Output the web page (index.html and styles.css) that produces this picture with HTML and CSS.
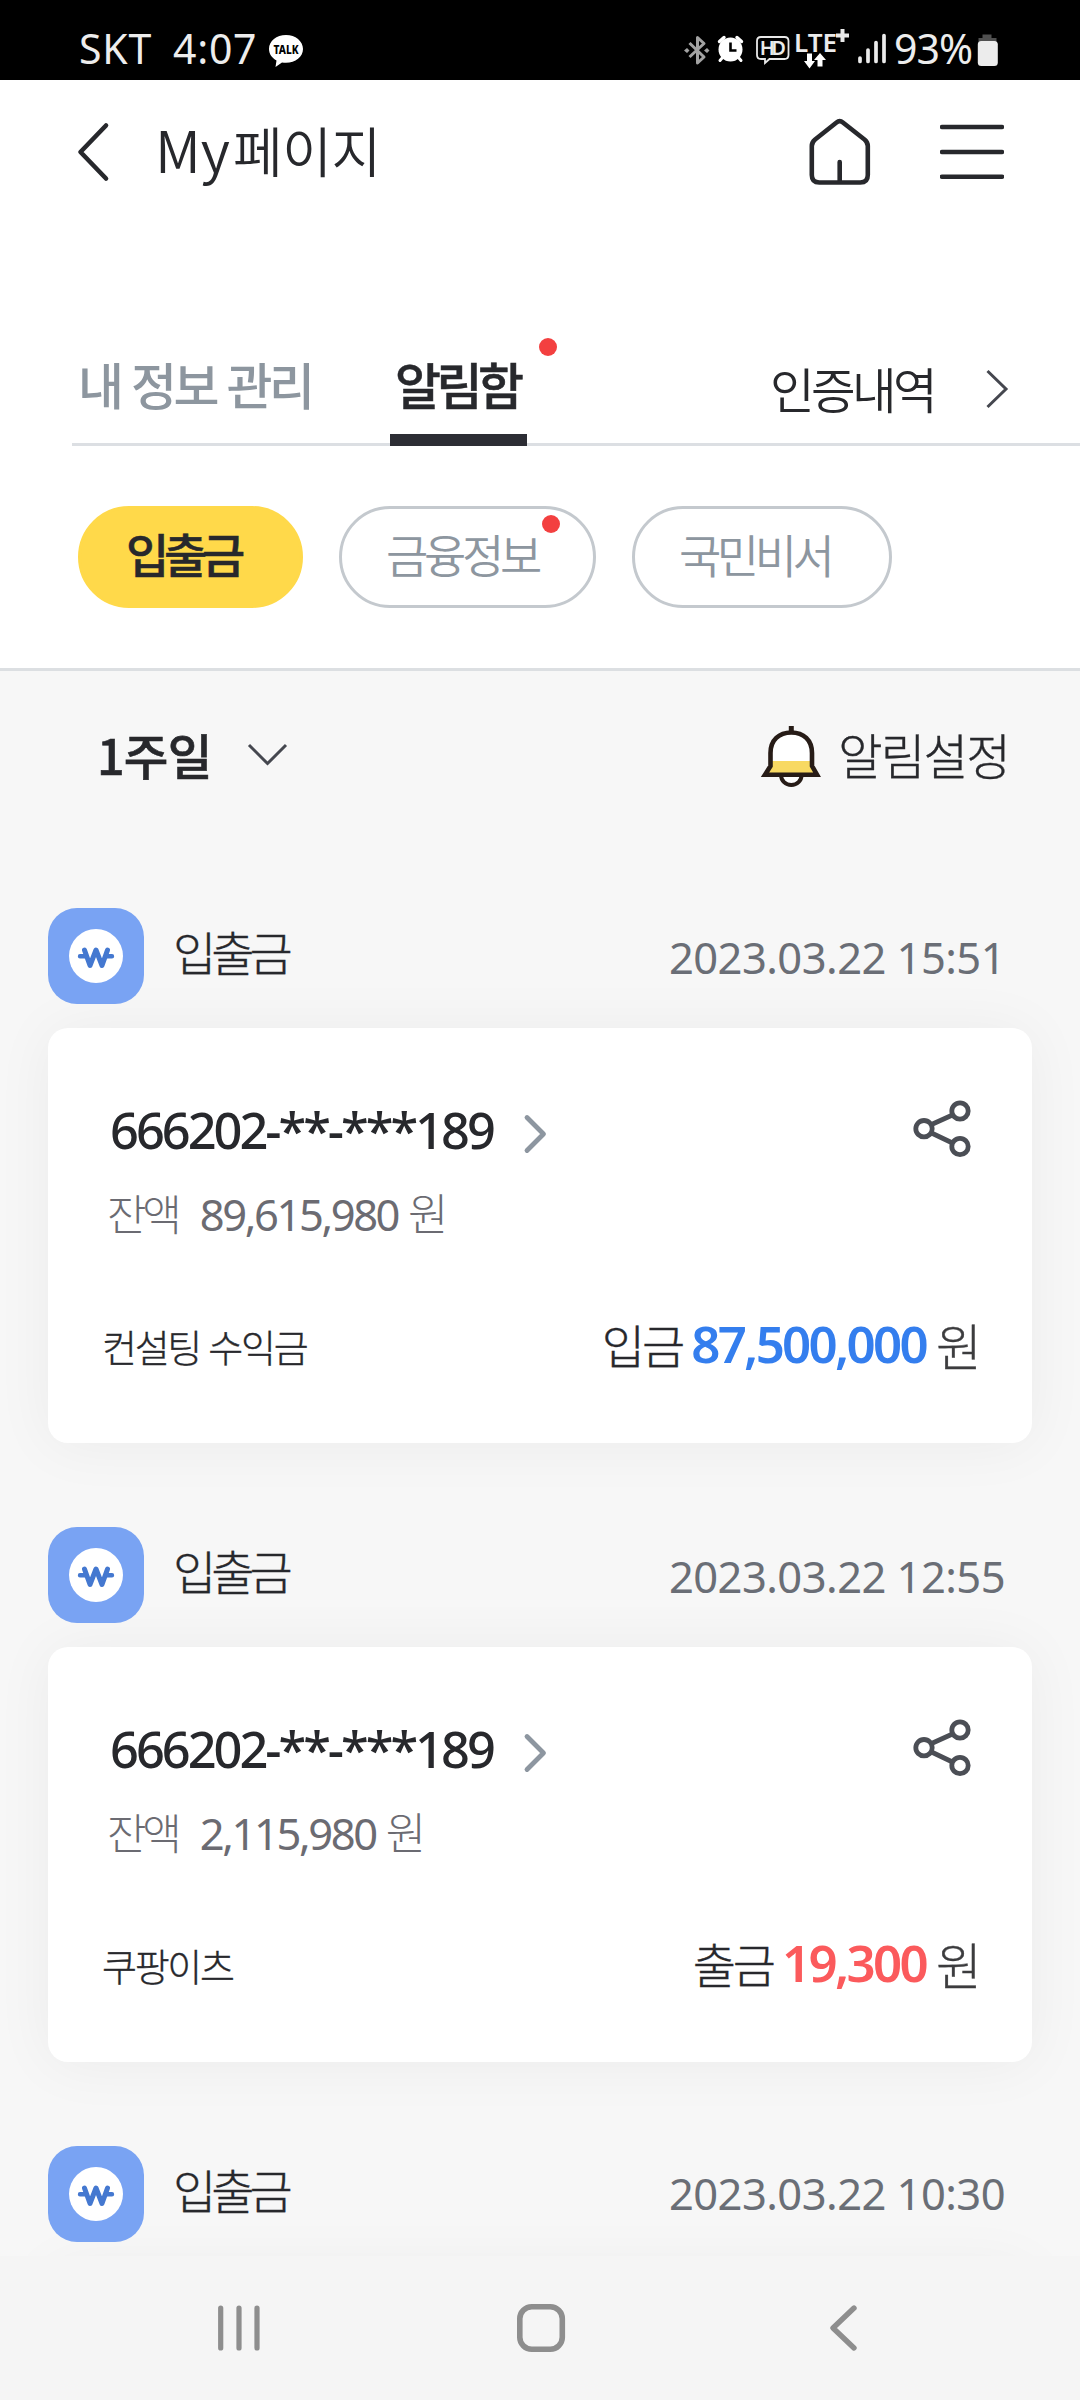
FILE: index.html
```
<!DOCTYPE html>
<html lang="ko">
<head>
<meta charset="utf-8">
<title>My페이지</title>
<link rel="stylesheet" href="styles.css">
</head>
<body>
<svg width="0" height="0" class="defs" aria-hidden="true">
  <symbol id="won" viewBox="0 0 96 96">
    <circle cx="48" cy="48" r="27" fill="#fff"/>
    <path d="M36.500 42.200l5.500 15.300L48 42l6 15.500 5.500-15.300" fill="none" stroke="#4478d0" stroke-width="5" stroke-linecap="round" stroke-linejoin="round"/>
    <path d="M32 48.200h6M58 48.200h6" stroke="#4478d0" stroke-width="4.400" stroke-linecap="round"/>
  </symbol>
  <symbol id="share" viewBox="0 0 60 60">
    <g fill="none" stroke="#4b4e55" stroke-width="4.800">
      <circle cx="12" cy="29.700" r="8.200"/><circle cx="48" cy="12" r="8.200"/><circle cx="48" cy="47.500" r="8.200"/>
      <path d="M19.500 25.500l21-9.500M19.500 34l21 10"/>
    </g>
  </symbol>
  <symbol id="go" viewBox="0 0 26 40">
    <path d="M5 3.500L21.500 20 5 36.500" fill="none" stroke="#8d96a0" stroke-width="4.800" stroke-linecap="round" stroke-linejoin="round"/>
  </symbol>
</svg>

<div class="statusbar">
  <span class="carrier">SKT</span>
  <span class="clock">4:07</span>
  <svg class="talk" width="40" height="80" viewBox="0 0 40 80">
    <path d="M20 35C10.500 35 3 41 3 49c0 5 3 9 7.500 11.500L9.500 67l6.500-4.500c1.300.2 2.600.3 4 .3 9.500 0 17-6 17-13.800S29.500 35 20 35z" fill="#fff"/>
    <text x="20" y="54" text-anchor="middle" textLength="25" lengthAdjust="spacingAndGlyphs" class="talk-text">TALK</text>
  </svg>
  <svg class="indicators" width="212" height="80" viewBox="680 0 212 80">
    <path d="M689.500 43l14.500 14-6.500 6V37.500l6.500 6-14.500 13.500" fill="none" stroke="#a2a2a2" stroke-width="3" stroke-linejoin="round"/>
    <path d="M684 50.500l3-2.500 2.500 2.500-2.500 2.500zM704 50.500l3-2.500 2.500 2.500-2.500 2.500z" fill="#a2a2a2"/>
    <circle cx="730.500" cy="49.500" r="12" fill="#fff"/>
    <path d="M719.500 41.500l4.500-4M741.500 41.500l-4.500-4" stroke="#fff" stroke-width="3.400" stroke-linecap="round"/>
    <path d="M723 57l-3 3.500M738 57l3 3.500" stroke="#fff" stroke-width="3" stroke-linecap="round"/>
    <path d="M730.500 42.500v8h6" fill="none" stroke="#000" stroke-width="2.600"/>
    <path d="M761 37h23.500q4 0 4 4v14q0 4-4 4h-15l-4.500 4v-4h-4q-4 0-4-4V41q0-4 4-4z" fill="none" stroke="#e8e8e8" stroke-width="1.800"/>
    <text x="772.800" y="55" text-anchor="middle" textLength="26" class="hd-text">HD</text>
    <text x="794" y="52" textLength="43" class="lte-text">LTE</text>
    <path d="M842.500 29v13M836 35.500h13" stroke="#ebebeb" stroke-width="4"/>
    <path d="M807 53.500h5V61h3l-5.500 7.500L804 61h3zM817.500 66.500h5V60h3.500l-6-7-6 7h3.500z" fill="#fff"/>
    <path d="M860 58v3.500M868 50v11.500M876 42.500v19M884 35.500v26" stroke="#ebebeb" stroke-width="3.700" stroke-linecap="round"/>
  </svg>
  <span class="battery-level">93%</span>
  <svg width="24" height="80" viewBox="974 0 24 80">
    <path d="M982.500 34.500h9V38h5v6h-18v-6h4z" fill="#505050"/>
    <rect x="977.800" y="41" width="20" height="25" rx="3.500" fill="#ececec"/>
  </svg>
</div>

<header class="header">
  <svg width="34" height="64" viewBox="76 120 34 64"><path d="M106 125.500L80.500 152 106 178.500" fill="none" stroke="#27282c" stroke-width="4.600" stroke-linecap="round" stroke-linejoin="round"/></svg>
  <h1 class="title">My<span class="title-ko">페이지</span></h1>
  <div class="actions">
    <svg width="64" height="68" viewBox="808 118 64 68"><path d="M836.500 122.500q3.200-2.600 6.400 0l21.600 17q3.300 2.800 3.300 6.500v29q0 7.500-7.500 7.500h-41q-7.500 0-7.500-7.500v-29q0-3.700 3.300-6.500zM839.700 182v-20" fill="none" stroke="#27282c" stroke-width="4.600" stroke-linecap="round" stroke-linejoin="round"/></svg>
    <svg width="64" height="60" viewBox="940 122 64 60"><path d="M942 127h60M942 152h60M942 176.700h60" stroke="#27282c" stroke-width="4.600" stroke-linecap="round"/></svg>
  </div>
</header>

<nav class="tabs">
  <span class="tab">내 정보 관리</span>
  <span class="tab tab-active">알림함<i class="dot"></i></span>
  <span class="cert">인증내역
    <svg width="26" height="44" viewBox="984 367 26 44"><path d="M987.500 372l18.500 18-18.500 18" fill="none" stroke="#45474f" stroke-width="3"/></svg>
  </span>
</nav>

<div class="chips">
  <span class="chip chip-active">입출금</span>
  <span class="chip">금융정보<i class="dot"></i></span>
  <span class="chip chip-last">국민비서</span>
</div>

<main class="feed">
  <div class="filter">
    <span class="period">1주일</span>
    <svg width="44" height="26" viewBox="246 742 44 26"><path d="M249 746l18.500 18.500L286 746" fill="none" stroke="#45474f" stroke-width="3"/></svg>
    <span class="settings">
      <svg width="62" height="60" viewBox="0 0 62 60" class="bell">
        <path d="M31.300 2v6" stroke="#271c17" stroke-width="5"/>
        <path d="M21 51a10.300 10 0 0 0 20.600 0" fill="#fff" stroke="#271c17" stroke-width="4"/>
        <path d="M10.500 42V29C10.500 16 19 8.500 31.300 8.500S52 16 52 29v13l5 8.700H5z" fill="#fff"/>
        <path d="M10.500 37H52v5l5 8.700H5l5.500-8.700z" fill="#f8d962"/>
        <path d="M10.500 42V29C10.500 16 19 8.500 31.300 8.500S52 16 52 29v13l5 8.700H5z" fill="none" stroke="#271c17" stroke-width="4.600"/>
      </svg>알림설정</span>
  </div>

  <section class="item">
    <div class="item-head">
      <svg class="item-icon"><use href="#won"/></svg>
      <span class="kind">입출금</span>
      <time class="date">2023.03.22 15:51</time>
    </div>
    <article class="card">
      <div class="account-row">
        <span class="account">666202-**-***189</span>
        <svg class="go"><use href="#go"/></svg>
        <svg class="share"><use href="#share"/></svg>
      </div>
      <div class="balance"><span>잔액</span><span class="balance-num">89,615,980</span><span class="balance-won">원</span></div>
      <div class="detail">
        <span class="memo">컨설팅 수익금</span>
        <span class="amount"><span class="amount-kind">입금</span><b class="num in">87,500,000</b><span class="won">원</span></span>
      </div>
    </article>
  </section>

  <section class="item">
    <div class="item-head">
      <svg class="item-icon"><use href="#won"/></svg>
      <span class="kind">입출금</span>
      <time class="date">2023.03.22 12:55</time>
    </div>
    <article class="card">
      <div class="account-row">
        <span class="account">666202-**-***189</span>
        <svg class="go"><use href="#go"/></svg>
        <svg class="share"><use href="#share"/></svg>
      </div>
      <div class="balance"><span>잔액</span><span class="balance-num">2,115,980</span><span class="balance-won">원</span></div>
      <div class="detail">
        <span class="memo">쿠팡이츠</span>
        <span class="amount"><span class="amount-kind">출금</span><b class="num out">19,300</b><span class="won">원</span></span>
      </div>
    </article>
  </section>

  <section class="item">
    <div class="item-head">
      <svg class="item-icon"><use href="#won"/></svg>
      <span class="kind">입출금</span>
      <time class="date date-last">2023.03.22 10:30</time>
    </div>
    <article class="card"></article>
  </section>
</main>

<footer class="navbar">
  <svg width="50" height="54" viewBox="214 2301 50 54"><path d="M220.700 2308v40M239 2308v40M257 2308v40" stroke="#8e8e8e" stroke-width="5.200" stroke-linecap="round"/></svg>
  <svg width="54" height="54" viewBox="514 2301 54 54"><rect x="519.800" y="2306.700" width="42.500" height="42.500" rx="12" fill="none" stroke="#8e8e8e" stroke-width="5.600"/></svg>
  <svg width="34" height="54" viewBox="827 2301 34 54"><path d="M854 2308l-21 20 21 20" fill="none" stroke="#8e8e8e" stroke-width="5.400" stroke-linecap="round" stroke-linejoin="round"/></svg>
</footer>
</body>
</html>
```
FILE: styles.css
```
* { box-sizing: border-box; }

body {
  margin: 0;
  width: 1080px;
  height: 2400px;
  display: flex;
  flex-direction: column;
  overflow: hidden;
  background: #fff;
  color: #27282c;
  font-family: "Noto Sans CJK KR", "Noto Sans", sans-serif;
  font-weight: 350;
  white-space: nowrap;
}

svg { display: block; flex: none; }
.defs { position: absolute; }

/* Status bar */
.statusbar {
  flex: none;
  height: 80px;
  padding: 0 82px 0 79px;
  display: flex;
  align-items: flex-start;
  background: #000;
  color: #ededed;
  font: 400 41px/64px "Noto Sans", sans-serif;
}
.statusbar span { padding-top: 16px; }
.carrier { letter-spacing: .8px; }
.clock { margin-left: 21px; letter-spacing: .7px; }
.talk { margin-left: 9px; }
.talk-text { font: 800 12.5px "Noto Sans", sans-serif; fill: #000; }
.indicators { margin-left: auto; }
.hd-text { font: 600 20px "Noto Sans", sans-serif; fill: #ebebeb; }
.lte-text { font: 600 26px "Noto Sans", sans-serif; fill: #ebebeb; }
.battery-level { margin: 0 2px; letter-spacing: -1px; }

/* Header */
.header {
  flex: none;
  height: 144px;
  padding: 0 76px;
  display: flex;
  align-items: center;
}
.title {
  margin: 0 0 6px 45px;
  font-size: 57px;
  line-height: 60px;
  font-weight: 350;
  letter-spacing: 0;
}
.title-ko {
  margin-left: 3px;
  font-size: 54px;
  letter-spacing: -.5px;
}
.actions { margin-left: auto; display: flex; align-items: center; gap: 68px; }

/* Tabs */
.tabs {
  flex: none;
  height: 222px;
  margin-left: 72px;
  border-bottom: 3px solid #dcdfe3;
  display: flex;
  align-items: flex-end;
}
.tab {
  position: relative;
  width: 318px;
  margin-bottom: -3px;
  padding: 0 0 21px 6px;
  border-bottom: 12px solid transparent;
  font-size: 50px;
  line-height: 60px;
  font-weight: 500;
  letter-spacing: -3.5px;
  color: #8d969f;
}
.tab-active {
  width: 137px;
  padding-left: 5px;
  border-color: #2c2d34;
  color: #27282c;
  letter-spacing: -4.5px;
  -webkit-text-stroke: .5px #27282c;
}
.dot {
  position: absolute;
  width: 18px;
  height: 18px;
  border-radius: 50%;
  background: #f34040;
}
.tab .dot { left: 149px; top: -15px; }
.cert {
  margin-left: auto;
  padding: 0 70px 25px 0;
  display: flex;
  align-items: center;
  gap: 50px;
  font-size: 48.5px;
  line-height: 60px;
  letter-spacing: -3.6px;
}

/* Chips */
.chips {
  flex: none;
  height: 225px;
  padding: 60px 0 0 78px;
  border-bottom: 3px solid #dcdfe2;
  display: flex;
  gap: 36px;
}
.chip {
  position: relative;
  width: 257px;
  height: 102px;
  padding-left: 44px;
  border: 3px solid #c4c9ce;
  border-radius: 51px;
  font-size: 46px;
  line-height: 88px;
  letter-spacing: -4.3px;
  color: #8d969f;
}
.chip-active {
  width: 225px;
  padding-left: 45px;
  border-color: #ffd94a;
  background: #ffd94a;
  color: #27282c;
  font-size: 47px;
  font-weight: 500;
  letter-spacing: -5.3px;
  -webkit-text-stroke: .5px #27282c;
}
.chip-last { width: 260px; letter-spacing: -4.5px; }
.chip .dot { left: 200px; top: 6px; }

/* Notification feed */
.feed {
  flex: none;
  height: 1585px;
  padding: 53px 48px 0;
  overflow: hidden;
  background: #f7f7f7;
}
.filter {
  height: 60px;
  margin-bottom: 124px;
  padding: 0 23px 0 49px;
  display: flex;
  align-items: center;
  gap: 34px;
  font-size: 48.5px;
  line-height: 60px;
}
.period {
  font-weight: 500;
  letter-spacing: -.8px;
  -webkit-text-stroke: .6px #27282c;
}
.settings {
  margin-left: auto;
  display: flex;
  gap: 16px;
  font-weight: 300;
  letter-spacing: -1.9px;
  -webkit-text-stroke: .35px #27282c;
}
.bell { overflow: visible; }

.item { margin-bottom: 84px; }
.item-head {
  height: 96px;
  margin-bottom: 24px;
  padding-right: 27px;
  display: flex;
  align-items: center;
}
.item-icon {
  width: 96px;
  height: 96px;
  border-radius: 29px;
  background: #79a3f3;
}
.kind {
  margin: 0 0 10px 29px;
  font-size: 47px;
  line-height: 60px;
  font-weight: 300;
  letter-spacing: -5px;
  -webkit-text-stroke: .35px #27282c;
}
.date {
  margin: 2px 0 0 auto;
  font: 400 43.5px/60px "Noto Sans", sans-serif;
  letter-spacing: -.55px;
  color: #6a6e76;
}
.date-last { margin-top: -3px; }

.card {
  height: 415px;
  padding: 71px 60px 0 62px;
  border-radius: 20px;
  background: #fff;
  box-shadow: 0 2px 60px rgba(0, 0, 0, .05);
}
.account-row { height: 60px; display: flex; align-items: center; }
.account {
  margin-top: 2px;
  font: 500 50.5px/60px "Noto Sans", sans-serif;
  letter-spacing: -3px;
}
.go { width: 26px; height: 40px; margin: 10px 0 0 29px; }
.share { width: 60px; height: 60px; margin-left: auto; }

.balance {
  margin: 28px 0 0 -3px;
  display: flex;
  align-items: baseline;
  font-size: 43px;
  line-height: 50px;
  font-weight: 300;
  letter-spacing: -4.2px;
  color: #6b6b72;
}
.balance-num {
  margin: 0 10px 0 22px;
  font: 400 43.5px/50px "Noto Sans", sans-serif;
  letter-spacing: -2.4px;
}
.balance-won { font-size: 44px; letter-spacing: 0; }

.detail {
  margin: 77px -7px 0 -8px;
  height: 60px;
  display: flex;
  justify-content: space-between;
  line-height: 60px;
  font-weight: 300;
}
.memo {
  font-size: 38px;
  letter-spacing: -2.3px;
  -webkit-text-stroke: .35px #27282c;
}
.amount {
  margin: -2px -3px 0 0;
  display: flex;
  align-items: flex-start;
  font-size: 47px;
}
.amount-kind { letter-spacing: -3px; -webkit-text-stroke: .35px #27282c; }
.num {
  margin: -1px 10px 0 9px;
  font: 600 51px/60px "Noto Sans", sans-serif;
  letter-spacing: -2.7px;
}
.in { color: #347eee; }
.out { color: #fb5a5c; }
.won { font-size: 50px; color: #3c3c3e; -webkit-text-stroke: .35px #3c3c3e; }

/* System navigation */
.navbar {
  flex: none;
  height: 144px;
  padding: 0 85px 0 88px;
  display: grid;
  grid-template-columns: repeat(3, 1fr);
  place-items: center;
  background: #f5f5f5;
}
```
